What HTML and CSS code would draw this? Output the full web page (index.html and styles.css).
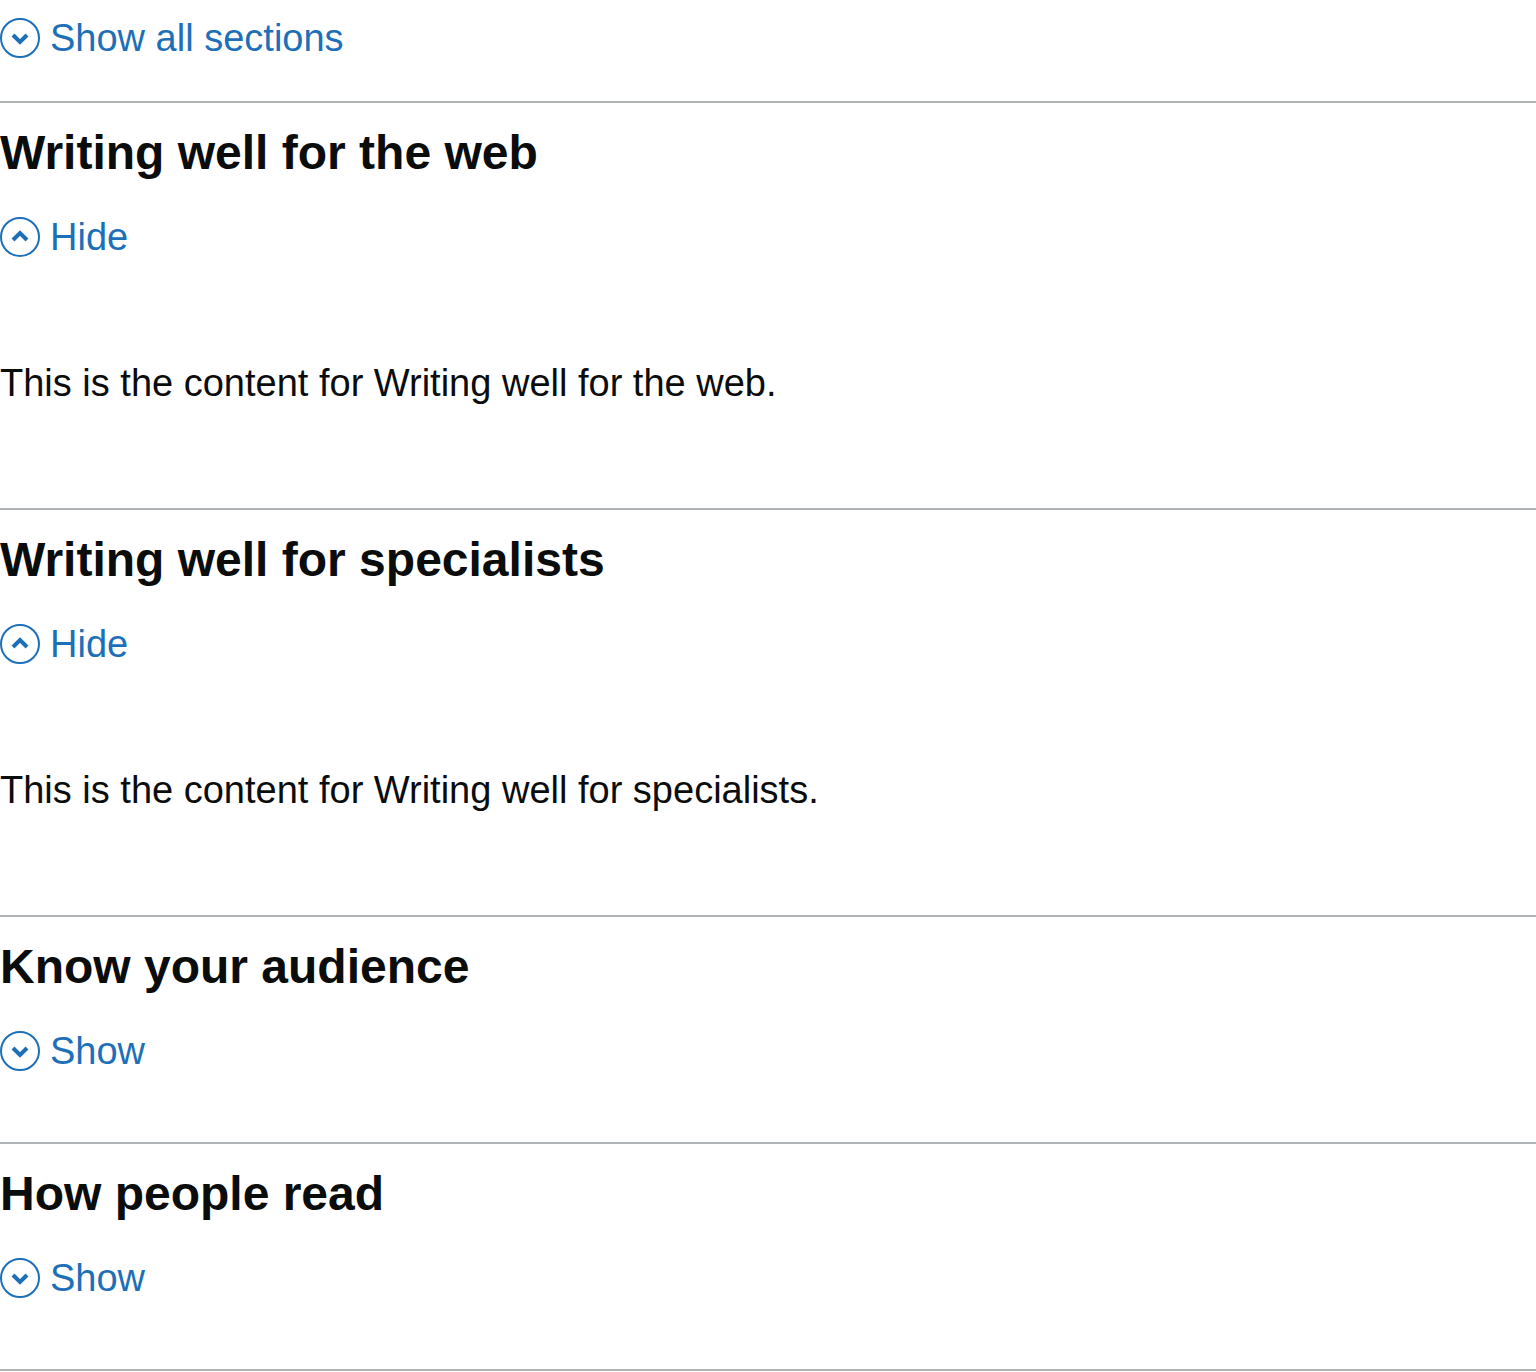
FILE: index.html
```html
<!DOCTYPE html>
<html lang="en">
<head>
<meta charset="utf-8">
<title>Accordion</title>
<link rel="stylesheet" href="styles.css">
</head>
<body>
<svg class="sprite" aria-hidden="true">
  <symbol id="down" viewBox="0 0 40 40"><circle cx="20" cy="20" r="19"/><path d="M13 17l7 7 7-7"/></symbol>
  <symbol id="up" viewBox="0 0 40 40"><circle cx="20" cy="20" r="19"/><path d="M13 23l7-7 7 7"/></symbol>
</svg>
<main class="accordion">
  <div class="controls">
    <button class="toggle" type="button" aria-expanded="false"><svg class="icon" aria-hidden="true"><use href="#down"/></svg>Show all sections</button>
  </div>
  <section class="section">
    <h2 class="heading">Writing well for the web</h2>
    <button class="toggle" type="button" aria-expanded="true"><svg class="icon" aria-hidden="true"><use href="#up"/></svg>Hide</button>
    <p class="content">This is the content for Writing well for the web.</p>
  </section>
  <section class="section">
    <h2 class="heading">Writing well for specialists</h2>
    <button class="toggle" type="button" aria-expanded="true"><svg class="icon" aria-hidden="true"><use href="#up"/></svg>Hide</button>
    <p class="content">This is the content for Writing well for specialists.</p>
  </section>
  <section class="section">
    <h2 class="heading">Know your audience</h2>
    <button class="toggle" type="button" aria-expanded="false"><svg class="icon" aria-hidden="true"><use href="#down"/></svg>Show</button>
  </section>
  <section class="section">
    <h2 class="heading">How people read</h2>
    <button class="toggle" type="button" aria-expanded="false"><svg class="icon" aria-hidden="true"><use href="#down"/></svg>Show</button>
  </section>
</main>
</body>
</html>
```
FILE: styles.css
```css
body {
  margin: 0;
  background: #fff;
  color: #0b0c0c;
  font-family: "Liberation Sans", Arial, sans-serif;
}
.sprite {
  position: absolute;
  width: 0;
  height: 0;
}
.accordion {
  border-bottom: 2px solid #b1b4b6;
}
.controls {
  padding: 13px 0 38px;
}
.section {
  padding: 20px 0 66px;
  border-top: 2px solid #b1b4b6;
}
.heading {
  margin: 0 0 29px;
  font-size: 48px;
  line-height: 60px;
}
.toggle {
  display: flex;
  align-items: center;
  gap: 10px;
  padding: 0;
  border: 0;
  background: none;
  color: #1d70b8;
  font-family: inherit;
  font-size: 38px;
  line-height: 50px;
  cursor: pointer;
}
.icon {
  width: 40px;
  height: 40px;
  fill: none;
  stroke: currentColor;
  stroke-width: 2;
}
.icon path, .sprite path {
  stroke-width: 4;
}
.content {
  margin: 96px 0 34px;
  font-size: 38px;
  line-height: 50px;
}
```
